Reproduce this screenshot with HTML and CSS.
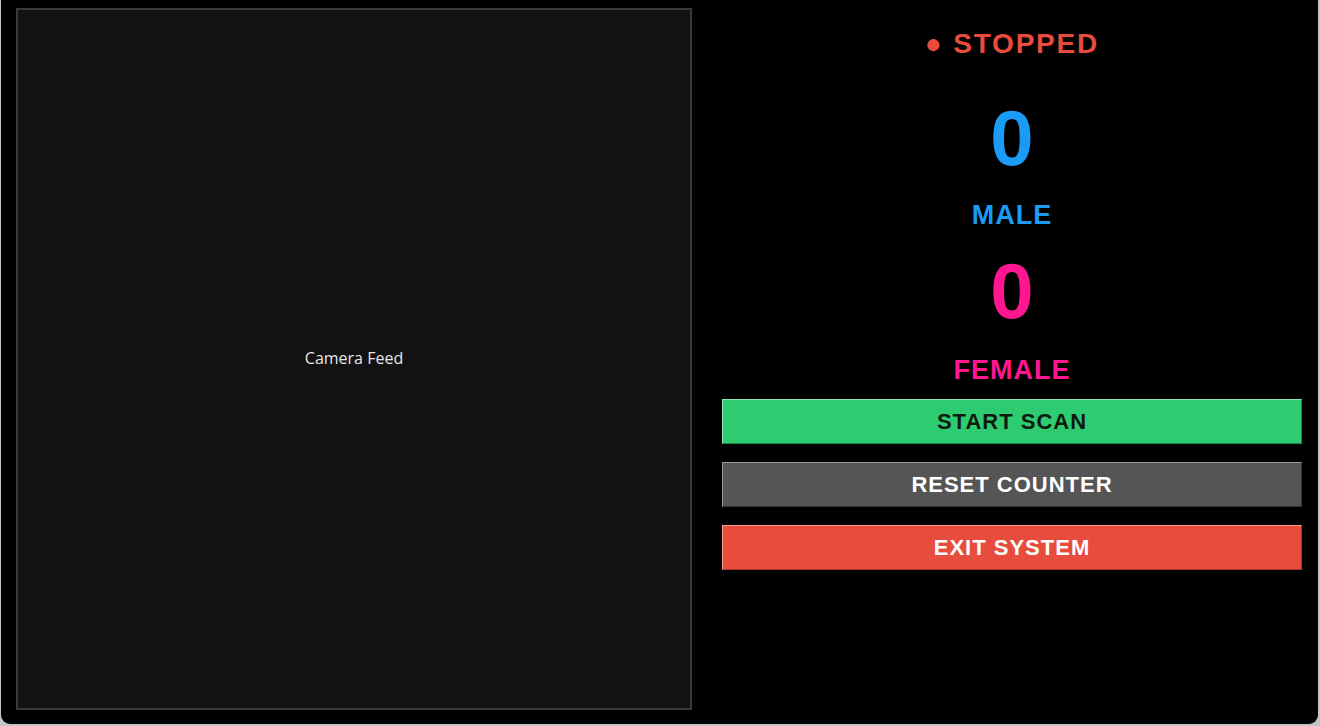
FILE: index.html
```html
<!DOCTYPE html>
<html>
<head>
<meta charset="utf-8">
<link rel="stylesheet" href="styles.css">
</head>
<body>
<div class="window">
  <div class="camera">
    <span class="camera-label">Camera Feed</span>
  </div>
  <div class="side">
    <div class="status">● STOPPED</div>
    <div class="count male">0</div>
    <div class="label male label-male">MALE</div>
    <div class="count female count-female">0</div>
    <div class="label female label-female">FEMALE</div>
    <div class="buttons">
      <div class="btn btn-start">START SCAN</div>
      <div class="btn btn-reset">RESET COUNTER</div>
      <div class="btn btn-exit">EXIT SYSTEM</div>
    </div>
  </div>
</div>
</body>
</html>
```

FILE: styles.css
```css
html, body {
  margin: 0;
  padding: 0;
  background: #c4c4c4;
  width: 1320px;
  height: 726px;
  overflow: hidden;
}
.window {
  margin-left: 1px;
  width: 1317px;
  height: 724px;
  background: #000;
  border-radius: 0 0 9px 9px;
  display: flex;
  box-sizing: border-box;
  padding: 8px 16px 0 15px;
  gap: 30px;
}
.camera {
  width: 676px;
  height: 702px;
  box-sizing: border-box;
  background: #121212;
  border: 2px solid #3a3a3a;
  display: flex;
  align-items: center;
  justify-content: center;
  flex-shrink: 0;
}
.camera-label {
  font-family: "Open Sans", "Noto Sans", sans-serif;
  font-size: 16px;
  color: #e6e6e6;
  margin-top: -2px;
}
.side {
  flex: 1;
  display: flex;
  flex-direction: column;
  align-items: stretch;
  font-family: "Liberation Sans", Arial, sans-serif;
  font-weight: bold;
  text-align: center;
}
.status {
  margin-top: 16px;
  font-size: 28px;
  line-height: 40px;
  letter-spacing: 1.8px;
  color: #e74c3c;
}
.count {
  font-size: 78px;
  line-height: 90px;
}
.male { color: #1a9bf5; }
.female { color: #ff1690; }
.status + .count { margin-top: 29px; }
.label {
  font-size: 27px;
  line-height: 40px;
  letter-spacing: 1px;
}
.label-male { margin-top: 12px; }
.count-female { margin-top: 11px; }
.label-female { margin-top: 14px; }
.buttons {
  margin-top: 9px;
  display: flex;
  flex-direction: column;
  gap: 18px;
}
.btn {
  height: 45px;
  box-sizing: border-box;
  font-size: 22px;
  line-height: 43px;
  letter-spacing: 1px;
  border: 1px solid;
  color: #fff;
}
.btn-start {
  background: #2ecc71;
  color: #0d1a10;
  border-color: #8fe6b2 #1f8a4c #1f8a4c #8fe6b2;
}
.btn-reset {
  background: #555555;
  border-color: #9a9a9a #333 #333 #9a9a9a;
}
.btn-exit {
  background: #e74c3c;
  border-color: #f5a096 #a8342a #a8342a #f5a096;
}
```
